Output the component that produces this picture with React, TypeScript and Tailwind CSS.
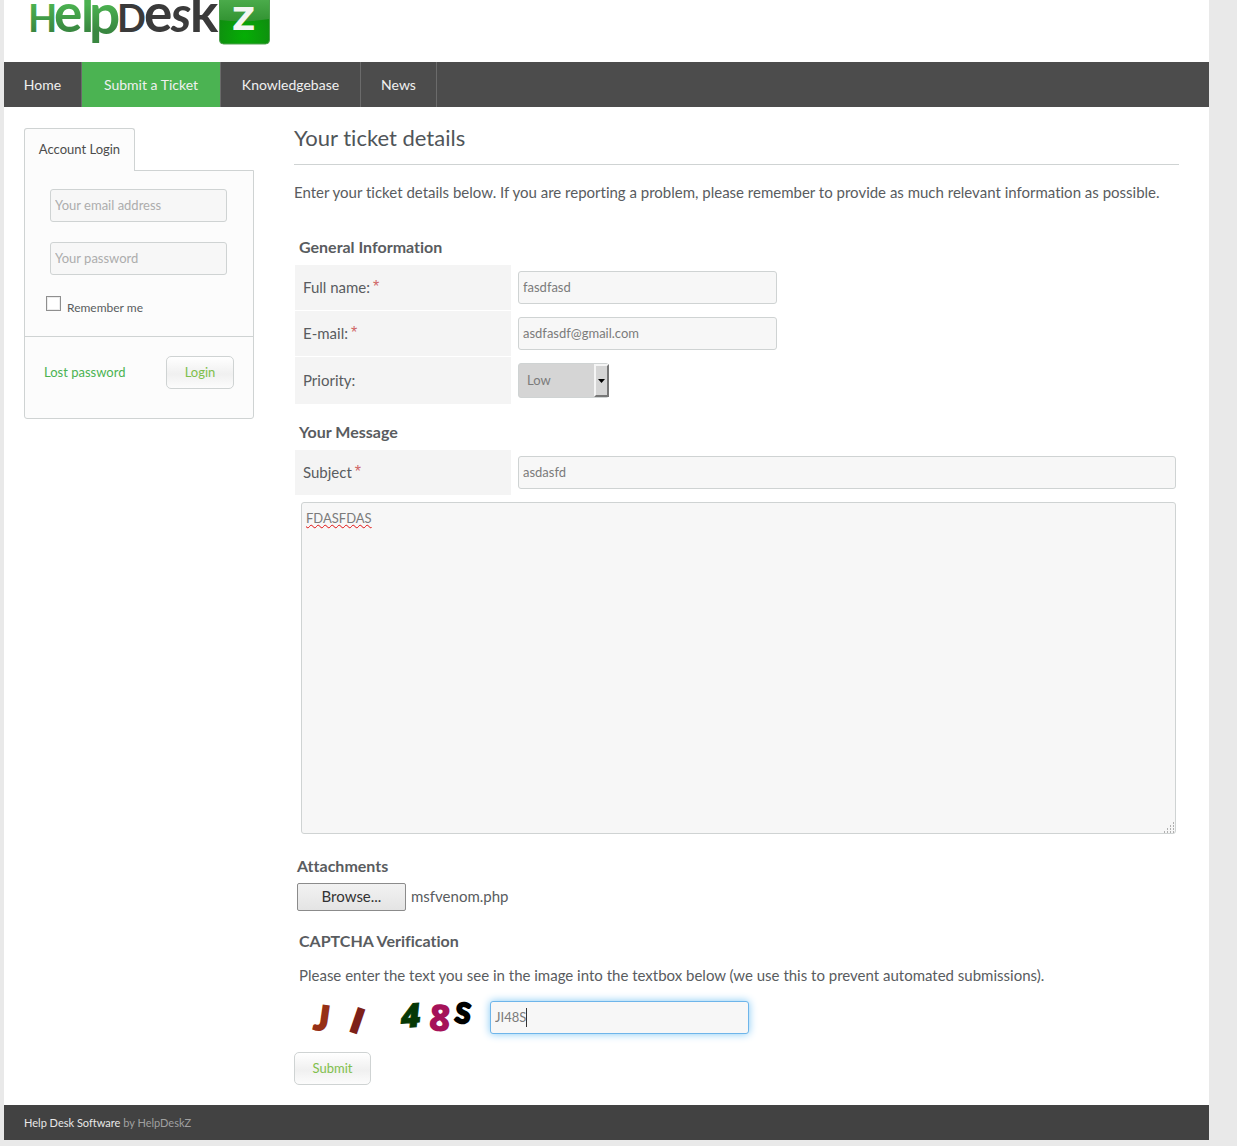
import { useState } from "react";
import type { ReactNode } from "react";

const field =
  "h-[33px] rounded-[3px] border border-[#cfd3d3] bg-[#f7f7f7] px-1 pb-[2px] text-[13px] text-[#7b7b7b] outline-none placeholder:text-[#adadad]";
const pill =
  "h-[33px] rounded-[5px] border border-[#cfd3d3] bg-linear-to-b from-white via-[#f0f0f0] via-55% to-[#fcfcfc] pb-[2px] text-[13px] text-[#80bf4c]";

function Logo() {
  return (
    <svg
      className="block h-[62px] w-[280px] overflow-visible"
      viewBox="0 0 280 62"
      role="img"
      aria-label="HelpDeskZ"
      fontFamily="Lato, sans-serif"
    >
      <defs>
        <linearGradient id="word" x1="0" y1="0" x2="0" y2="45" gradientUnits="userSpaceOnUse">
          <stop offset="0.1" stopColor="#4bb150" />
          <stop offset="0.7" stopColor="#398740" />
        </linearGradient>
        <radialGradient id="tile" cx="0.5" cy="0.85" r="0.75">
          <stop offset="0" stopColor="#05ae05" />
          <stop offset="1" stopColor="#128312" />
        </radialGradient>
        <linearGradient id="shine" x1="0" y1="0" x2="0" y2="1">
          <stop offset="0" stopColor="#55b555" />
          <stop offset="1" stopColor="#329332" />
        </linearGradient>
      </defs>
      <g fill="url(#word)" fontWeight="700">
        <text x="24" y="32" fontSize="38">H</text>
        <text x="50" y="32" fontSize="53">e</text>
        <text x="77" y="32" fontSize="53">l</text>
        <text x="85" y="34" fontSize="55">p</text>
      </g>
      <g fill="#3a3a3a" fontWeight="700">
        <text x="113" y="32" fontSize="38">D</text>
        <text x="140" y="32" fontSize="53">e</text>
        <text x="167" y="32" fontSize="50" fontStyle="italic">s</text>
        <text x="186" y="32" fontSize="53">k</text>
      </g>
      <rect x="215.500" y="-10" width="50" height="54" rx="4" fill="url(#tile)" stroke="#4f9f4f" />
      <path d="M216-9h49v28q-24 4-49 1z" fill="url(#shine)" />
      <text x="228" y="30" fontSize="32" fontFamily="'DejaVu Sans', sans-serif" fontWeight="700" fill="#f4f6f4">
        Z
      </text>
    </svg>
  );
}

function Row({ id, label, required, children }: { id: string; label: string; required?: boolean; children: ReactNode }) {
  return (
    <div className="grid grid-cols-[216px_1fr] gap-[7px]">
      <label htmlFor={id} className="flex items-center bg-[#f4f4f4] px-2 pb-px">
        {label}
        {required && <span className="ml-[3px] font-['Liberation_Sans',sans-serif] text-base leading-5 text-[#cf6565]">*</span>}
      </label>
      <div className="py-[6px]">{children}</div>
    </div>
  );
}

function Captcha() {
  return (
    <svg
      className="block h-[40px] w-[196px]"
      viewBox="0 0 196 40"
      role="img"
      aria-label="Verification code"
      fontFamily="Lato, sans-serif"
      fontWeight="900"
    >
      <text transform="translate(19 32) rotate(8)" fontSize="34" fill="#963016" stroke="#963016" strokeWidth="2">
        J
      </text>
      <text transform="translate(55 33) rotate(19)" fontSize="32" fill="#7d2018" stroke="#7d2018" strokeWidth="3">
        I
      </text>
      <text
        transform="translate(106 31) rotate(-4) skewX(-10)"
        fontSize="33"
        fontFamily="'Open Sans', sans-serif"
        fontWeight="800"
        fill="#053805"
        stroke="#053805"
      >
        4
      </text>
      <text
        transform="translate(134 33) rotate(5)"
        fontSize="37"
        fontFamily="'Open Sans', sans-serif"
        fontWeight="800"
        fill="#a51259"
      >
        8
      </text>
      <text transform="translate(160 25) rotate(8)" fontSize="28" fill="#000" stroke="#000" strokeWidth="2">
        S
      </text>
    </svg>
  );
}

const nav = [
  { label: "Home", width: "w-[78px]" },
  { label: "Submit a Ticket", width: "w-[139px]", active: true },
  { label: "Knowledgebase", width: "w-[140px]" },
  { label: "News", width: "w-[76px]" },
];

export default function App() {
  const [priority, setPriority] = useState("Low");

  return (
    <div className="min-h-screen bg-[#e9e9e9] pr-7 pb-[6px] pl-1 font-['Lato',sans-serif] text-[15px] leading-5 text-[#595c60] [font-variant-ligatures:none]">
      <div className="bg-white">
        <header className="overflow-hidden">
          <Logo />
          <nav className="flex h-[45px] bg-[#4c4c4c] text-sm text-[#f0f0f0]">
            {nav.map((item) => (
              <a
                key={item.label}
                href="#"
                className={`${item.width} ${item.active ? "bg-[#4bb352]" : ""} flex items-center justify-center border-r border-[#6b6b6b]`}
              >
                {item.label}
              </a>
            ))}
          </nav>
        </header>

        <div className="flex items-start gap-10 px-5 pt-[21px] pb-5">
          <aside className="w-[230px] shrink-0 text-[13px]">
            <div className="relative z-10 -mb-px flex h-[43px] w-[111px] items-center justify-center rounded-t-[3px] border border-b-0 border-[#cfd3d3] bg-[#fcfcfc] pb-[2px] text-[#4c4c4c]">
              Account Login
            </div>
            <form className="rounded-b-[3px] border border-[#cfd3d3] bg-[#fcfcfc]" onSubmit={(e) => e.preventDefault()}>
              <div className="flex flex-col gap-5 pt-[18px] pr-[26px] pl-[25px]">
                <input aria-label="Your email address" type="email" placeholder="Your email address" className={field} />
                <input aria-label="Your password" type="password" placeholder="Your password" className={field} />
              </div>
              <label className="flex items-center gap-[6px] border-b border-[#cfd3d3] pt-[21px] pr-5 pb-[17px] pl-[21px] text-xs leading-5">
                <input
                  type="checkbox"
                  className="mb-2 size-[15px] appearance-none border border-[#8f8f8f] bg-white shadow-[inset_0_0_0_1px_#ececec] checked:bg-[#4bb352]"
                />
                Remember me
              </label>
              <div className="flex items-center justify-between px-[19px] pt-[19px] pb-[29px]">
                <a href="#" className="pb-px text-[#4bb352]">Lost password</a>
                <button type="submit" className={`${pill} w-[68px]`}>Login</button>
              </div>
            </form>
          </aside>

          <main className="mr-[10px] min-w-0 flex-1">
            <h1 className="border-b border-[#cfd3d3] pb-4 text-[22px] leading-5 text-[#505559]">
              Your ticket details
            </h1>
            <p className="pt-[17px]">
              Enter your ticket details below. If you are reporting a problem, please remember to provide as much
              relevant information as possible.
            </p>

            <form onSubmit={(e) => e.preventDefault()}>
              <section className="px-px pt-[35px]">
                <h2 className="px-1 pb-2 text-base leading-5 font-bold">General Information</h2>
                <div className="flex flex-col gap-px">
                  <Row id="name" label="Full name:" required>
                    <input id="name" defaultValue="fasdfasd" className={`${field} block w-full max-w-[259px]`} />
                  </Row>
                  <Row id="email" label="E-mail:" required>
                    <input
                      id="email"
                      type="email"
                      defaultValue="asdfasdf@gmail.com"
                      className={`${field} block w-full max-w-[259px]`}
                    />
                  </Row>
                  <Row id="priority" label="Priority:">
                    <div className="relative h-[35px] w-[91px]">
                      <select
                        id="priority"
                        value={priority}
                        onChange={(e) => setPriority(e.target.value)}
                        className="h-full w-full appearance-none rounded-[3px] border border-[#cfd3d3] bg-[#d5d5d5] pb-px pl-2 text-[13px] text-[#7b7b7b]"
                      >
                        <option>Low</option>
                        <option>Medium</option>
                        <option>High</option>
                      </select>
                      <span className="pointer-events-none absolute inset-y-px right-0 flex w-[15px] items-center justify-center border-2 border-t-[#f5f5f5] border-r-[#777] border-b-[#777] border-l-[#f5f5f5] bg-[#d5d5d5]">
                        <svg viewBox="0 0 7 4" className="h-1 w-[7px]" aria-hidden="true">
                          <path d="M0 0h7L3.500 4z" fill="#000" />
                        </svg>
                      </span>
                    </div>
                  </Row>
                </div>
              </section>

              <section className="px-px pt-[18px]">
                <h2 className="px-1 pb-2 text-base leading-5 font-bold">Your Message</h2>
                <div className="pr-[2px]">
                  <Row id="subject" label="Subject" required>
                    <input id="subject" defaultValue="asdasfd" className={`${field} block w-full`} />
                  </Row>
                </div>
                <div className="relative mt-[7px] mr-[2px] ml-[6px]">
                  <textarea
                    aria-label="Message"
                    defaultValue="FDASFDAS"
                    spellCheck={false}
                    className="block h-[332px] w-full resize-none rounded-[3px] border border-[#cfd3d3] bg-[#f7f7f7] px-1 py-[5px] text-[13px] leading-5 text-[#7b7b7b] underline decoration-[#e01010] decoration-wavy decoration-1 underline-offset-1 outline-none"
                  />
                  <svg viewBox="0 0 11 11" className="absolute right-px bottom-px size-[11px]" aria-hidden="true">
                    <path
                      d="M9 1h1M6 4h1M9 4h1M3 7h1M6 7h1M9 7h1M0 10h1M3 10h1M6 10h1M9 10h1"
                      stroke="#999"
                      strokeWidth="1.500"
                    />
                  </svg>
                </div>
              </section>

              <section className="px-[3px] pt-[22px]">
                <h2 className="pb-[7px] text-base leading-5 font-bold">Attachments</h2>
                <div className="flex items-center gap-[5px]">
                  <button
                    type="button"
                    className="h-7 w-[109px] rounded-[2px] border border-[#8b8b8b] bg-linear-to-b from-[#f2f2f2] to-[#e4e4e4] pb-[2px] text-[#333]"
                  >
                    Browse...
                  </button>
                  <span className="pb-[2px]">msfvenom.php</span>
                </div>
              </section>

              <section className="pt-5">
                <h2 className="px-[5px] text-base leading-5 font-bold">CAPTCHA Verification</h2>
                <p className="px-[5px] pt-[14px]">
                  Please enter the text you see in the image into the textbox below (we use this to prevent automated
                  submissions).
                </p>
                <div className="flex items-center pt-3">
                  <Captcha />
                  <div className="relative w-full max-w-[259px]">
                    <input
                      aria-label="Verification text"
                      defaultValue="JI48S"
                      className="block h-[33px] w-full rounded-[3px] border border-[#6eb5ea] bg-[#f7f7f7] px-1 text-[13px] text-[#7b7b7b] caret-transparent shadow-[0_0_8px_#82c8f5] outline-none"
                    />
                    <span className="absolute top-[7px] left-9 h-[19px] w-px bg-[#333]" />
                  </div>
                </div>
              </section>

              <button type="submit" className={`${pill} mt-[15px] block w-[77px]`}>Submit</button>
            </form>
          </main>
        </div>

        <footer className="flex h-[35px] items-center bg-[#424242] px-5 text-[11px] text-[#a0a0a0]">
          <span>
            <a href="#" className="text-[#e8e8e8]">Help Desk Software</a> by HelpDeskZ
          </span>
        </footer>
      </div>
    </div>
  );
}
